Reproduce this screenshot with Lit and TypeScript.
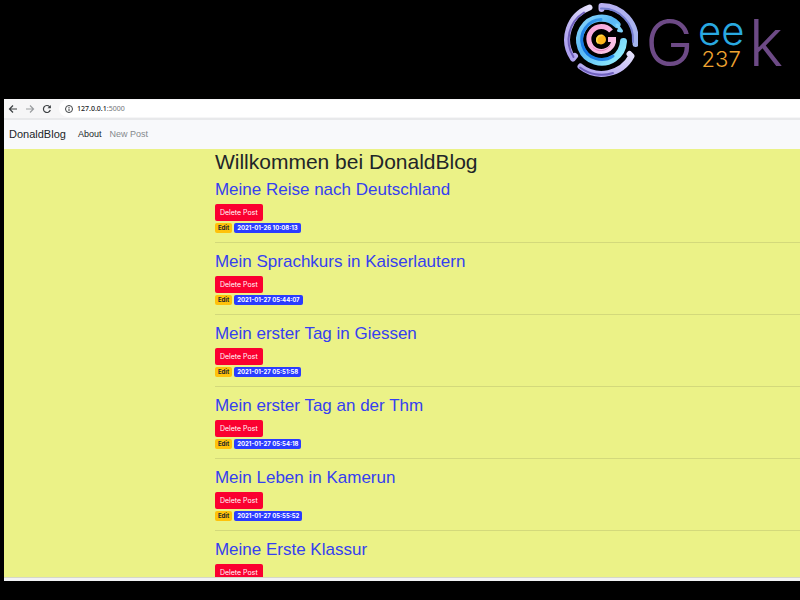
import { LitElement, html, css } from "lit";
import { customElement, property } from "lit/decorators.js";

interface Post {
  title: string;
  date: string;
}

const POSTS: Post[] = [
  { title: "Meine Reise nach Deutschland", date: "2021-01-26 10:08:13" },
  { title: "Mein Sprachkurs in Kaiserlautern", date: "2021-01-27 05:44:07" },
  { title: "Mein erster Tag in Giessen", date: "2021-01-27 05:51:58" },
  { title: "Mein erster Tag an der Thm", date: "2021-01-27 05:54:18" },
  { title: "Mein Leben in Kamerun", date: "2021-01-27 05:55:52" },
  { title: "Meine Erste Klassur", date: "" },
];

@customElement("geek-logo")
export class GeekLogo extends LitElement {
  static styles = css`
    :host {
      display: flex;
      align-items: flex-start;
      gap: 7px;
      font-family: Inter, "Liberation Sans", sans-serif;
      font-weight: 300;
    }
    .emblem {
      display: block;
      width: 76px;
      height: 76px;
    }
    .word {
      display: flex;
      gap: 2px;
      height: 62px;
      padding-top: 11px;
      color: #6d4a86;
    }
    .big {
      font-size: 65px;
      line-height: 62px;
    }
    .stack {
      display: flex;
      flex-direction: column;
      align-items: center;
      width: 51px;
    }
    .ee {
      color: #29a9e1;
      font-size: 40px;
      line-height: 38px;
    }
    .num {
      color: #f0a431;
      font-size: 22px;
      line-height: 18px;
    }
  `;
  render() {
    return html`
      <svg class="emblem" viewBox="561 1 76 76" fill="none" stroke-linecap="round" stroke-linejoin="round" aria-hidden="true">
        <defs>
          <linearGradient id="lilac" x1="0" y1="0" x2="1" y2="1">
            <stop offset="0" stop-color="#b9b0f2" />
            <stop offset="1" stop-color="#a3b4ee" />
          </linearGradient>
          <linearGradient id="violet" x1="1" y1="0" x2="0" y2="1">
            <stop offset="0" stop-color="#e4e0fc" />
            <stop offset="1" stop-color="#a99cee" />
          </linearGradient>
          <linearGradient id="sky" x1="0" y1="0" x2="1" y2="1">
            <stop offset="0" stop-color="#8ad8fb" />
            <stop offset="0.4" stop-color="#58b6f5" />
            <stop offset="1" stop-color="#98f4ff" />
          </linearGradient>
          <linearGradient id="deep" x1="1" y1="0" x2="0" y2="1">
            <stop offset="0" stop-color="#3fa3ee" />
            <stop offset="1" stop-color="#0f6fe0" />
          </linearGradient>
          <linearGradient id="rose" x1="0" y1="0" x2="1" y2="1">
            <stop offset="0" stop-color="#f5a3da" />
            <stop offset="1" stop-color="#fbc6e8" />
          </linearGradient>
        </defs>
        <g stroke-width="6">
          <path d="M588.500 7.500A34 34 0 0 0 572 58.500L574 56" stroke="url(#violet)" />
          <path d="M600.500 9V6A34 34 0 0 1 634.500 44" stroke="url(#lilac)" />
          <path d="M579.500 66.500A34 34 0 0 0 630.500 56L628.500 54" stroke="url(#violet)" />
        </g>
        <g stroke="#6f60bd" stroke-width="2">
          <path d="M583 12.500A32 32 0 0 0 572.500 57" />
          <path d="M600 8.500A31 31 0 0 1 632 42" stroke="#767fd2" />
          <path d="M579 67.500A36 36 0 0 0 612 73" />
        </g>
        <path d="M616 24.500A22 22 0 1 0 622.500 41.500" stroke="url(#sky)" stroke-width="7" />
        <path d="M616 25L620.500 31L617.500 30.500" stroke="#7fd3fb" stroke-width="3" />
        <path d="M600 19.500A20 20 0 1 0 612 56" stroke="url(#deep)" stroke-width="3" />
        <path d="M610 31A12.500 12.500 0 1 0 612.500 42V39.500H607" stroke="url(#rose)" stroke-width="5" stroke-linecap="butt" stroke-linejoin="miter" />
        <path d="M592 47.500A11 11 0 0 0 609 46" stroke="#e287c3" stroke-width="1" />
        <circle cx="600" cy="39.500" r="5" fill="#fdb51c" />
        <path d="M597 43A4.500 4.500 0 0 1 601 35.500" stroke="#ffd84a" stroke-width="1.500" />
      </svg>
      <div class="word">
        <span class="big">G</span>
        <span class="stack"><span class="ee">ee</span><span class="num">237</span></span>
        <span class="big">k</span>
      </div>
    `;
  }
}

@customElement("browser-bar")
export class BrowserBar extends LitElement {
  static styles = css`
    :host {
      display: flex;
      align-items: center;
      gap: 7px;
      height: 19px;
      padding-left: 4px;
      background: #f6f6f7;
      border-bottom: 2px solid #e8e9eb;
    }
    button {
      display: flex;
      padding: 0;
      border: 0;
      background: none;
    }
    svg {
      display: block;
      width: 10px;
      height: 10px;
      fill: none;
      stroke: #3c4043;
      stroke-width: 1.200;
    }
    .dim svg {
      stroke: #9a9da0;
    }
    .address {
      flex: 1;
      display: flex;
      align-items: center;
      gap: 3px;
      height: 17px;
      padding-left: 5px;
      border-radius: 9px 0 0 9px;
      background: #fff;
      font: 7px/17px "Noto Sans", "Open Sans", sans-serif;
      color: #707376;
    }
    .address svg {
      stroke-width: 1;
    }
    b {
      font-weight: 500;
      color: #202124;
    }
  `;
  render() {
    return html`
      <button aria-label="Back">
        <svg viewBox="0 0 10 10"><path d="M9 5H1.500M5 1.500L1.500 5L5 8.500" /></svg>
      </button>
      <button class="dim" aria-label="Forward">
        <svg viewBox="0 0 10 10"><path d="M1 5H8.500M5 1.500L8.500 5L5 8.500" /></svg>
      </button>
      <button aria-label="Reload">
        <svg viewBox="0 0 10 10"><path d="M8.300 6A3.500 3.500 0 1 1 7.500 2.600L8.500 3.600" /><path d="M8.800 1V4.300H5.500Z" fill="#3c4043" stroke="none" /></svg>
      </button>
      <div class="address">
        <svg viewBox="0 0 10 10"><circle cx="5" cy="5" r="3.500" /><path d="M5 4.500V7M5 3V4" /></svg>
        <span><b>127.0.0.1</b>:5000</span>
      </div>
    `;
  }
}

@customElement("blog-post")
export class BlogPost extends LitElement {
  @property({ attribute: false }) post!: Post;

  static styles = css`
    :host {
      display: flex;
      flex-direction: column;
      align-items: flex-start;
      padding-bottom: 9px;
      margin-bottom: 8px;
      border-bottom: 1px solid #d3d97b;
    }
    h2 {
      margin: 0 0 3px;
      font-size: 17px;
      line-height: 22px;
      font-weight: 400;
    }
    h2 a {
      color: #3540f0;
      text-decoration: none;
    }
    .delete {
      height: 17px;
      padding: 0 5px;
      margin: 0 0 2px;
      border: 0;
      border-radius: 2px;
      background: #fb0030;
      color: #fff;
      font: 7px/17px Inter, "Liberation Sans", sans-serif;
    }
    .meta {
      display: flex;
      gap: 2px;
      font: 700 6px/10px Inter, "Liberation Sans", sans-serif;
    }
    .badge {
      padding: 0 3px;
      border-radius: 2px;
      text-decoration: none;
    }
    .edit {
      background: #ffc20a;
      color: #212529;
    }
    .date {
      background: #2a3cff;
      color: #fff;
    }
  `;
  render() {
    return html`
      <h2><a href="#post">${this.post.title}</a></h2>
      <button class="delete">Delete Post</button>
      ${this.post.date
        ? html`<div class="meta">
            <a class="badge edit" href="#edit">Edit</a>
            <span class="badge date">${this.post.date}</span>
          </div>`
        : null}
    `;
  }
}

@customElement("app-root")
export class AppRoot extends LitElement {
  static styles = css`
    :host {
      display: flex;
      flex-direction: column;
      height: 100vh;
      box-sizing: border-box;
      padding: 0 0 19px 4px;
      background: #000;
      color: #212529;
      font-family: "Liberation Sans", Arial, sans-serif;
    }
    .top {
      display: flex;
      flex: none;
      justify-content: flex-end;
      align-items: flex-start;
      height: 98px;
      padding: 1px 17px 0 0;
    }
    .window {
      display: flex;
      flex-direction: column;
      flex: 1;
      min-height: 0;
    }
    browser-bar,
    nav {
      flex: none;
    }
    nav {
      display: flex;
      align-items: center;
      gap: 8px;
      height: 28px;
      padding: 0 0 1px 5px;
      background: #f8f9fb;
      font-size: 9px;
    }
    nav a {
      color: #85898d;
      text-decoration: none;
    }
    nav a.brand {
      margin-right: 4px;
      font-size: 11px;
      color: #212529;
    }
    nav a.current {
      color: #212529;
    }
    main {
      flex: 1;
      min-height: 0;
      overflow: hidden;
      padding-left: 26.500%;
      background: #ebf287;
    }
    h1 {
      margin: 0 0 4px;
      font-size: 21px;
      line-height: 26px;
      font-weight: 400;
    }
    .edge {
      flex: none;
      height: 3px;
      background: #f1f2f4;
      border-top: 1px solid #d6d8c8;
    }
  `;
  render() {
    return html`
      <header class="top"><geek-logo></geek-logo></header>
      <div class="window">
        <browser-bar></browser-bar>
        <nav>
          <a class="brand" href="#home">DonaldBlog</a>
          <a class="current" href="#about">About</a>
          <a href="#new">New Post</a>
        </nav>
        <main>
          <h1>Willkommen bei DonaldBlog</h1>
          ${POSTS.map((post) => html`<blog-post .post=${post}></blog-post>`)}
        </main>
        <div class="edge"></div>
      </div>
    `;
  }
}
